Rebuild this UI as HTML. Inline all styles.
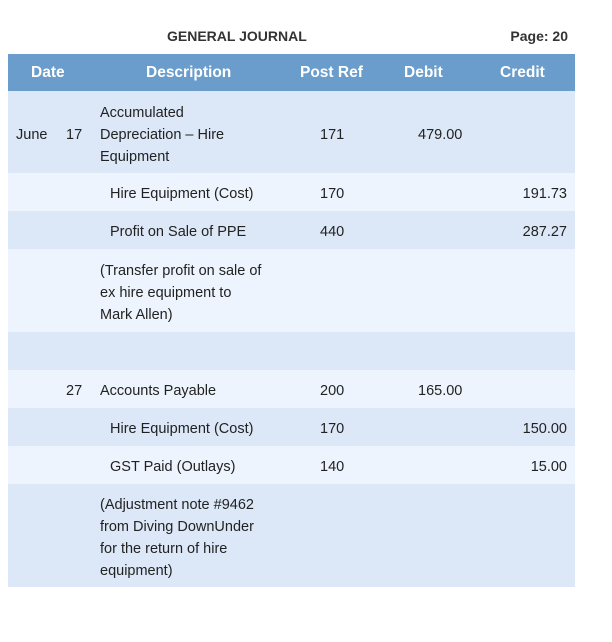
<!DOCTYPE html><html><head><style>
body{margin:0;width:612px;height:642px;background:#fff;font-family:"Liberation Sans",sans-serif;color:#222;position:relative;font-size:14.5px}
.a{position:absolute;white-space:nowrap}
.r{position:absolute;left:8px;width:567px}
.t{position:absolute;line-height:22px;margin-top:2px;white-space:nowrap}
.h{color:#fff;font-weight:bold;font-size:15.5px;top:64px}
</style></head><body>
<div class="a" style="left:167px;top:28px;font-weight:bold;font-size:14px;color:#333">GENERAL JOURNAL</div>
<div class="a" style="right:44px;top:28px;font-weight:bold;font-size:14px;color:#333">Page: 20</div>
<div class="r" style="top:54px;height:37px;background:#6a9dcb"></div>
<div class="a h" style="left:31px">Date</div>
<div class="a h" style="left:146px">Description</div>
<div class="a h" style="left:300px">Post Ref</div>
<div class="a h" style="left:404px">Debit</div>
<div class="a h" style="left:500px">Credit</div>
<div class="r" style="top:91px;height:82px;background:#dce8f7"></div>
<div class="r" style="top:173px;height:38px;background:#eef4fd"></div>
<div class="r" style="top:211px;height:38px;background:#dce8f7"></div>
<div class="r" style="top:249px;height:83px;background:#eef4fd"></div>
<div class="r" style="top:332px;height:38px;background:#dce8f7"></div>
<div class="r" style="top:370px;height:38px;background:#eef4fd"></div>
<div class="r" style="top:408px;height:38px;background:#dce8f7"></div>
<div class="r" style="top:446px;height:38px;background:#eef4fd"></div>
<div class="r" style="top:484px;height:103px;background:#dce8f7"></div>

<div class="t" style="left:100px;top:100px">Accumulated<br>Depreciation – Hire<br>Equipment</div>
<div class="t" style="left:16px;top:122px">June</div>
<div class="t" style="left:66px;top:122px">17</div>
<div class="t" style="left:320px;top:122px">171</div>
<div class="t" style="left:418px;top:122px">479.00</div>

<div class="t" style="left:110px;top:181px">Hire Equipment (Cost)</div>
<div class="t" style="left:320px;top:181px">170</div>
<div class="t" style="right:45px;top:181px">191.73</div>

<div class="t" style="left:110px;top:219px">Profit on Sale of PPE</div>
<div class="t" style="left:320px;top:219px">440</div>
<div class="t" style="right:45px;top:219px">287.27</div>

<div class="t" style="left:100px;top:258px">(Transfer profit on sale of<br>ex hire equipment to<br>Mark Allen)</div>

<div class="t" style="left:66px;top:378px">27</div>
<div class="t" style="left:100px;top:378px">Accounts Payable</div>
<div class="t" style="left:320px;top:378px">200</div>
<div class="t" style="left:418px;top:378px">165.00</div>

<div class="t" style="left:110px;top:416px">Hire Equipment (Cost)</div>
<div class="t" style="left:320px;top:416px">170</div>
<div class="t" style="right:45px;top:416px">150.00</div>

<div class="t" style="left:110px;top:454px">GST Paid (Outlays)</div>
<div class="t" style="left:320px;top:454px">140</div>
<div class="t" style="right:45px;top:454px">15.00</div>

<div class="t" style="left:100px;top:492px">(Adjustment note #9462<br>from Diving DownUnder<br>for the return of hire<br>equipment)</div>
</body></html>
